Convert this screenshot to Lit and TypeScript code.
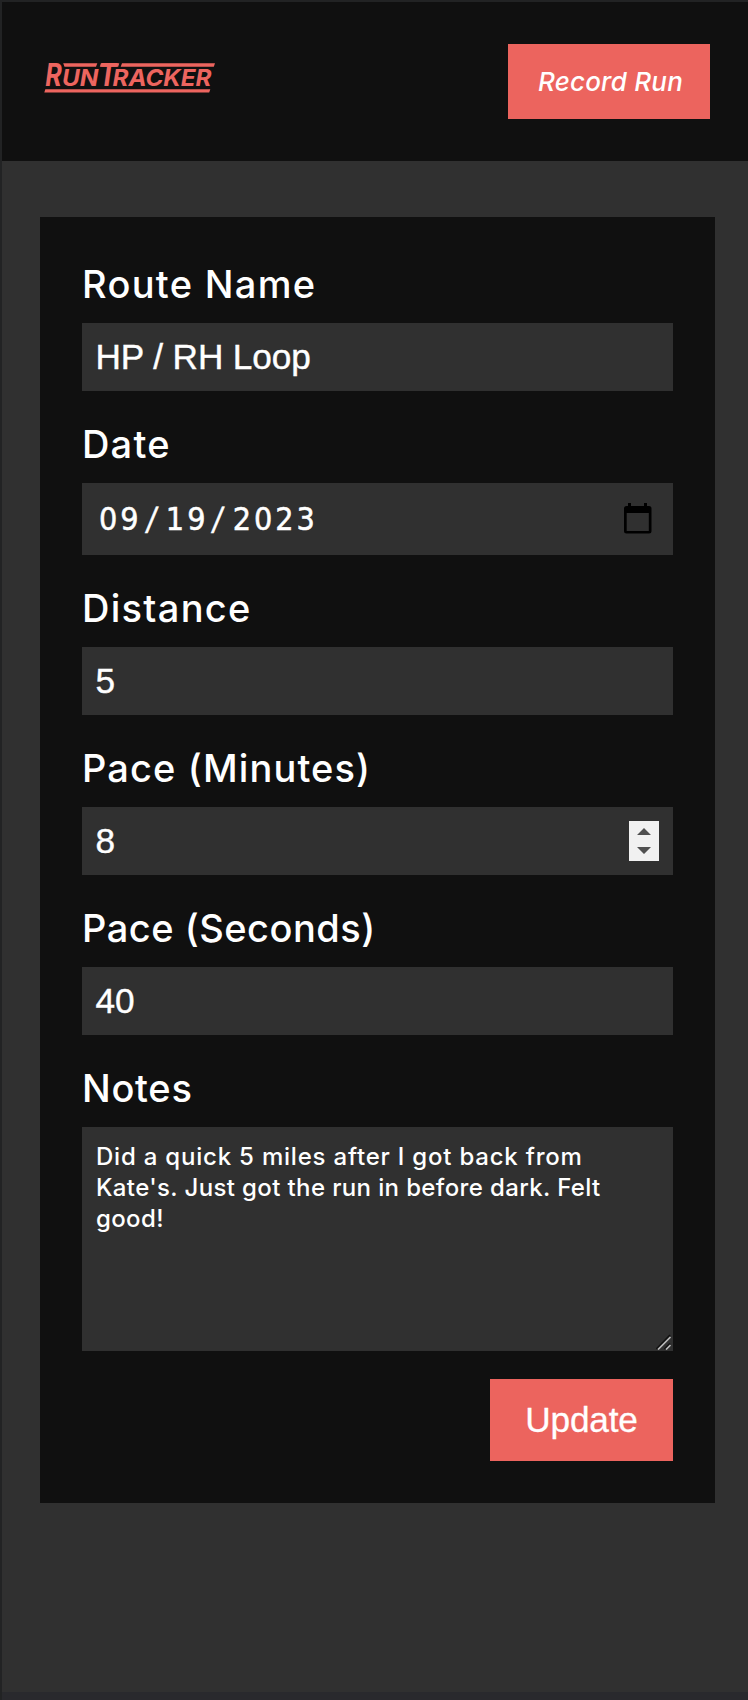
import { LitElement, html, css, svg } from "lit";
import { customElement } from "lit/decorators.js";

@customElement("run-logo")
class RunLogo extends LitElement {
  static styles = css`
    :host { display: block; width: 172px; height: 44px; }
    .logo { display: block; fill: #ed655f; overflow: visible; }
    .word { font-family: "Inter", "Liberation Sans", sans-serif; font-weight: 700; font-style: italic; }
    .big { font-size: 31px; }
    .small { font-size: 23.5px; }
  `;
  render() {
    return html`<svg class="logo" width="172" height="44" viewBox="44 56 172 44" role="img" aria-label="RunTracker">
      ${svg`
        <g class="word">
          <text class="big" x="45.3" y="86.4" textLength="16.5" lengthAdjust="spacingAndGlyphs">R</text>
          <text class="small" x="62" y="86.4" textLength="36.5" lengthAdjust="spacingAndGlyphs">UN</text>
          <text class="big" x="98.500" y="86.4" textLength="18" lengthAdjust="spacingAndGlyphs">T</text>
          <text class="small" x="112.5" y="86.4" textLength="99" lengthAdjust="spacingAndGlyphs">RACKER</text>
        </g>
        <path d="M63.2 63.3H97.3L96 66.8H64.5Z M100.9 63.3H119.3L118.2 66.8H99.8Z M122 63.3H215L213.8 66.8H120.7Z M45.3 89.2H210.3L209.2 92.5H44.3Z"/>
      `}
    </svg>`;
  }
}

@customElement("app-root")
class AppRoot extends LitElement {
  static styles = css`
    :host { display: block; }
    * { box-sizing: border-box; }
    .page {
      height: 1700px; padding: 2px 0 0 2px; background: #222324;
      display: flex; flex-direction: column;
      font-family: "Inter", "Liberation Sans", sans-serif; color: #fff;
    }
    .header {
      height: 159px; flex: none; background: #101010; padding: 42px 38px 42px 42px;
      display: flex; justify-content: space-between; align-items: flex-start;
    }
    .brand { padding-top: 12px; }
    .record {
      width: 202px; height: 75px; background: #ec645e; color: #fff; padding-left: 3px;
      display: flex; align-items: center; justify-content: center;
      font-size: 26px; font-style: italic; font-weight: 500; letter-spacing: 0.2px; white-space: nowrap;
      text-decoration: none;
    }
    .main { flex: 1; background: #303030; padding: 56px 33px 0 38px; }
    .footer { height: 8px; flex: none; background: #29292d; }
    .form {
      background: #101010; padding: 42px; height: 1286px;
      display: flex; flex-direction: column; gap: 28px;
    }
    .label {
      display: block; height: 64px; padding-top: 1px; line-height: 48px;
      font-size: 38px; font-weight: 450; white-space: nowrap;
    }
    .name { letter-spacing: 1.3px; }
    .date { letter-spacing: 1.2px; }
    .distance { letter-spacing: 1.3px; }
    .minutes { letter-spacing: 1.1px; }
    .seconds { letter-spacing: 0.5px; }
    .notes { letter-spacing: 0.7px; }
    .box {
      height: 68px; background: #303030; padding: 14px 14px 14px 13.5px;
      display: flex; align-items: center; justify-content: space-between;
      font: 35.2px/40px "Liberation Sans", Arial, sans-serif;
    }
    .value { -webkit-text-stroke: 0.4px #fff; letter-spacing: -0.1px; }
    .datebox { height: 72px; padding: 14px 19px 14px 17px; }
    .digits {
      display: flex; font: 32px/40px "DejaVu Sans Condensed", "DejaVu Sans", sans-serif; letter-spacing: 3px;
      -webkit-text-stroke: 0.5px #fff;
    }
    .slash { padding: 0 6.5px 0 5px; transform: skewX(-8deg); }
    .spin { background: #f1f1f1; display: block; }
    .area {
      height: 224px; background: #303030; padding: 14px 1px 1px 14px;
      display: flex; flex-direction: column; justify-content: space-between;
      font-size: 24px; line-height: 31px; font-weight: 450;
    }
    .line { white-space: nowrap; letter-spacing: 0.37px; }
    .first { letter-spacing: 0.79px; }
    .grip { display: block; align-self: flex-end; flex: none; }
    .update {
      align-self: flex-end; width: 183px; height: 82px; border: 0; padding: 0;
      background: #ec645e; color: #fff; font: 35.2px/40px "Liberation Sans", Arial, sans-serif;
      -webkit-text-stroke: 0.3px #fff; letter-spacing: -0.15px;
    }
  `;

  private field(cls: string, label: string, value: string, extra: unknown = "") {
    return html`<div>
      <span class="label ${cls}">${label}</span>
      <div class="box"><span class="value">${value}</span>${extra}</div>
    </div>`;
  }

  render() {
    const spinner = html`<svg class="spin" width="30" height="40" viewBox="0 0 30 40">
      <path fill="#505050" d="M8 14L15 7L22 14Z M8 26L15 33L22 26Z"/>
    </svg>`;
    return html`<div class="page">
      <header class="header">
        <div class="brand"><run-logo></run-logo></div>
        <a class="record">Record Run</a>
      </header>
      <main class="main">
        <div class="form">
          ${this.field("name", "Route Name", "HP / RH Loop")}
          <div>
            <span class="label date">Date</span>
            <div class="box datebox">
              <div class="digits"><span>09</span><span class="slash">/</span><span>19</span><span class="slash">/</span><span>2023</span></div>
              <svg width="32" height="34" viewBox="0 0 32 34">
                <path fill="#000" fill-rule="evenodd" d="M6 1H9V4H22V1H25V4H27Q29.5 4 29.5 6.500V29Q29.500 31.500 27 31.500H4.500Q2 31.500 2 29V6.500Q2 4 4.500 4H6Z M4.700 11V29H26.800V11Z"/>
              </svg>
            </div>
          </div>
          ${this.field("distance", "Distance", "5")}
          ${this.field("minutes", "Pace (Minutes)", "8", spinner)}
          ${this.field("seconds", "Pace (Seconds)", "40")}
          <div>
            <span class="label notes">Notes</span>
            <div class="area">
              <div>
                <div class="line first">Did a quick 5 miles after I got back from</div>
                <div class="line">Kate's. Just got the run in before dark. Felt</div>
                <div class="line">good!</div>
              </div>
              <svg class="grip" width="16" height="16" viewBox="0 0 16 16" fill="none">
                <path stroke="#101010" stroke-width="1.600" d="M0.500 15L14 1M8.500 15L14 9.500"/>
                <path stroke="#b8b8b8" stroke-width="1.700" d="M2 15.500L14.500 3M10 15.500L14.500 11"/>
              </svg>
            </div>
          </div>
          <button class="update">Update</button>
        </div>
      </main>
      <div class="footer"></div>
    </div>`;
  }
}
